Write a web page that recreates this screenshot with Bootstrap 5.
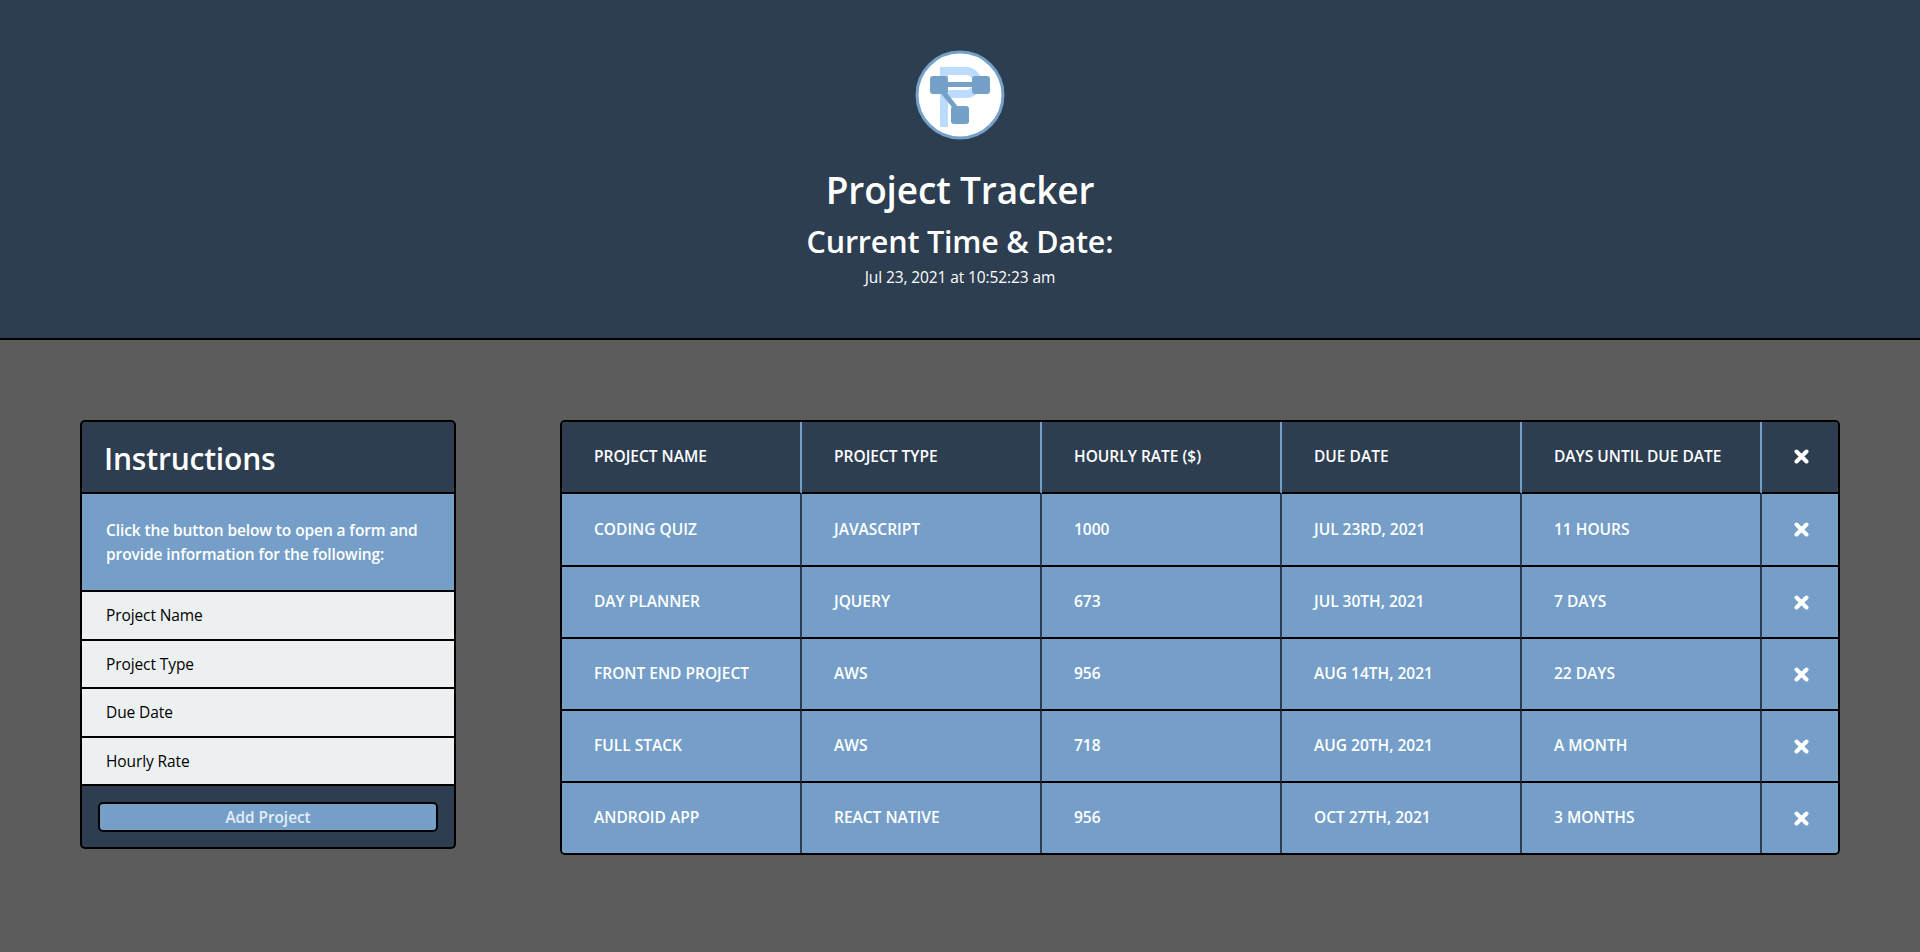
<!DOCTYPE html>
<html lang="en">
<head>
    <meta charset="UTF-8">
    <title>Project Tracker</title>
    <meta name="viewport" content="width=device-width, initial-scale=1">
    <link href="https://cdn.jsdelivr.net/npm/bootstrap@5.3.0/dist/css/bootstrap.min.css" rel="stylesheet">
    <style>
        body {
            background-color: #5c5c5c;
            font-family: "Open Sans", "Noto Sans", sans-serif;
            height: 952px;
            overflow: hidden;
        }
        .page-head {
            background-color: #2d3e50;
            border-bottom: 2px solid #000;
            height: 340px;
            padding-top: 50px;
            color: #fff;
        }
        .logo-svg { display: block; margin: 0 auto 26px; }
        .head-title { font-size: 37px; font-weight: 600; line-height: 48px; margin: 0; letter-spacing: -.15px; }
        .head-sub { font-size: 30.5px; font-weight: 600; line-height: 40px; margin: 7px 0 4px; letter-spacing: -.2px; }
        .head-date { font-size: 15.5px; line-height: 24px; margin: 0; letter-spacing: -.1px; }
        .main-area { padding: 80px 80px 0; gap: 104px; }
        .info-card {
            width: 376px;
            flex: none;
            border: 2px solid #000;
            border-radius: 5px;
            overflow: hidden;
            background-color: #2d3e50;
        }
        .info-head {
            height: 72px;
            padding: 0 22px;
            line-height: 74px;
            font-size: 30px;
            font-weight: 600;
            color: #fff;
            background-color: #2d3e50;
            border-bottom: 2px solid #000;
            letter-spacing: -.2px;
        }
        .info-body {
            height: 98px;
            padding: 24px 24px 0;
            font-size: 15.5px;
            line-height: 24px;
            font-weight: 600;
            color: #fff;
            background-color: #759fc8;
            border-bottom: 2px solid #000;
            letter-spacing: -.1px;
        }
        .list-group-flush > .list-group-item.info-item {
            height: 48.5px;
            padding: 0 24px;
            line-height: 46.5px;
            font-size: 15.5px;
            color: #000;
            background-color: #ecf0f1;
            border: 0;
            border-bottom: 2px solid #000;
            border-radius: 0;
            letter-spacing: -.1px;
        }
        .info-foot { padding: 16px 16px 15px; }
        .add-btn {
            display: block;
            width: 100%;
            height: 30px;
            padding: 0;
            font-size: 15.3px;
            font-weight: 600;
            line-height: 26px;
            color: #e3edf6;
            background-color: #759fc8;
            border: 2px solid #000;
            border-radius: 5px;
        }
        .tracker-wrap {
            width: 1280px;
            flex: none;
            align-self: flex-start;
            border: 2px solid #000;
            border-radius: 5px;
            overflow: hidden;
        }
        .tracker-table {
            table-layout: fixed;
            width: 1276px;
            margin: 0;
            border-collapse: separate;
            border-spacing: 0;
        }
        .tracker-table th, .tracker-table td {
            width: 240px;
            height: 72px;
            padding: 0 0 0 32px;
            vertical-align: middle;
            font-size: 15.5px;
            font-weight: 600;
            text-transform: uppercase;
            color: #fff;
            border: 0;
            border-right: 2px solid #2d3e50;
            border-bottom: 2px solid #000;
            background-color: #759fc8;
            box-shadow: none;
        }
        .tracker-table th {
            background-color: #2d3e50;
            border-right-color: #759fc8;
        }
        .tracker-table th:last-child, .tracker-table td:last-child {
            width: 76px;
            padding: 0 0 0 2px;
            text-align: center;
            border-right: 0;
        }
        .tracker-table tbody tr:first-child td { height: 73px; }
        .tracker-table tbody tr:last-child td { border-bottom: 0; height: 70px; }
        .tracker-table th .x-icon { margin-bottom: 2px; }
        .x-icon { display: block; margin: 0 auto; }
    </style>
</head>
<body>

<header class="page-head text-center">
    <svg class="logo-svg" width="90" height="90" viewBox="0 0 90 90">
        <circle cx="45" cy="45" r="43" fill="#fff" stroke="#75a0c8" stroke-width="3"/>
        <path d="M29 21 H51 a11.5 11.5 0 0 1 0 23 H33" fill="none" stroke="#bbdcff" stroke-width="8"/>
        <rect x="25" y="17" width="8" height="60" fill="#bbdcff"/>
        <path d="M28 42 L40 57" stroke="#75a0c8" stroke-width="5"/>
        <rect x="33" y="32" width="24" height="5" fill="#75a0c8"/>
        <rect x="15" y="26" width="18" height="18" rx="3" fill="#75a0c8"/>
        <rect x="57" y="26" width="18" height="18" rx="3" fill="#75a0c8"/>
        <rect x="36" y="56" width="18" height="18" rx="3" fill="#75a0c8"/>
    </svg>
    <h1 class="head-title">Project Tracker</h1>
    <h2 class="head-sub">Current Time &amp; Date:</h2>
    <p class="head-date">Jul 23, 2021 at 10:52:23 am</p>
</header>

<main class="main-area d-flex">
    <div class="info-card align-self-start">
        <div class="info-head">Instructions</div>
        <div class="info-body">Click the button below to open a form and provide information for the following:</div>
        <ul class="list-group list-group-flush">
            <li class="list-group-item info-item">Project Name</li>
            <li class="list-group-item info-item">Project Type</li>
            <li class="list-group-item info-item">Due Date</li>
            <li class="list-group-item info-item">Hourly Rate</li>
        </ul>
        <div class="info-foot">
            <button type="button" class="btn add-btn">Add Project</button>
        </div>
    </div>

    <div class="tracker-wrap">
        <table class="table tracker-table">
            <thead>
                <tr>
                    <th>Project Name</th>
                    <th>Project Type</th>
                    <th>Hourly Rate ($)</th>
                    <th>Due Date</th>
                    <th>Days Until Due Date</th>
                    <th><svg class="x-icon" width="15" height="15" viewBox="0 0 15 15"><path d="M2.5 2.5 L12.5 12.5 M12.5 2.5 L2.5 12.5" stroke="#fff" stroke-width="4" stroke-linecap="round"/></svg></th>
                </tr>
            </thead>
            <tbody id="projectRows"></tbody>
        </table>
    </div>
</main>

<script>
const projects = [
    ["Coding Quiz", "JavaScript", "1000", "Jul 23rd, 2021", "11 hours"],
    ["Day Planner", "jQuery", "673", "Jul 30th, 2021", "7 days"],
    ["Front End Project", "AWS", "956", "Aug 14th, 2021", "22 days"],
    ["Full Stack", "AWS", "718", "Aug 20th, 2021", "a month"],
    ["Android App", "React Native", "956", "Oct 27th, 2021", "3 months"]
];

const xIcon = '<svg class="x-icon" width="15" height="15" viewBox="0 0 15 15"><path d="M2.5 2.5 L12.5 12.5 M12.5 2.5 L2.5 12.5" stroke="#fff" stroke-width="4" stroke-linecap="round"/></svg>';

// Render table rows
const rows = document.getElementById("projectRows");
projects.forEach(p => {
    const tr = document.createElement("tr");
    tr.innerHTML = p.map(v => `<td>${v}</td>`).join("") + `<td>${xIcon}</td>`;
    rows.appendChild(tr);
});
</script>
<script src="https://cdn.jsdelivr.net/npm/bootstrap@5.3.0/dist/js/bootstrap.bundle.min.js"></script>
</body>
</html>
